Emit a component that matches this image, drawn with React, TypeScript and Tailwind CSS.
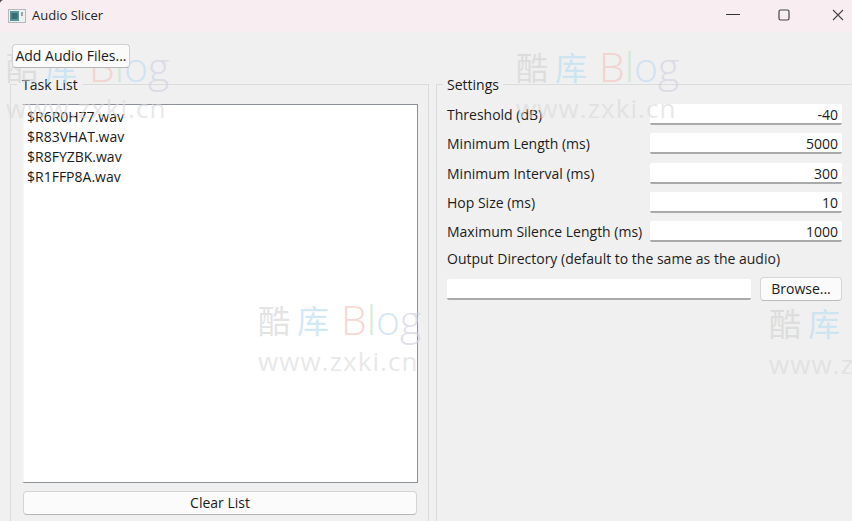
import React from "react";

const font = { fontFamily: '"Open Sans", "Noto Sans CJK SC", sans-serif' };

function Watermark({ className }: { className: string }) {
  return (
    <div className={`absolute pointer-events-none select-none w-[170px] ${className}`}>
      <div className="flex items-center h-[40px] leading-[40px]">
        <span className="text-[32px] text-[#d2d2d2] opacity-60 font-['Noto_Sans_CJK_SC']">酷</span>
        <span className="text-[32px] text-[#bfe0f2] opacity-70 ml-[7px] font-['Noto_Sans_CJK_SC']">库</span>
        <span className="text-[41px] text-[#f3c9c4] opacity-70 ml-[12px] font-light">B</span>
        <span className="text-[41px] text-[#c5e8c8] opacity-70 font-light">l</span>
        <span className="text-[41px] text-[#c4def0] opacity-70 font-light">o</span>
        <span className="text-[41px] text-[#d4d4e2] opacity-70 font-light">g</span>
      </div>
      <div className="mt-[7px] text-[26px] leading-[30px] text-[#dadada] opacity-60 tracking-[1.1px] whitespace-nowrap">www.zxki.cn</div>
    </div>
  );
}

function Field({ label, value }: { label: string; value: string }) {
  return (
    <div className="flex items-center justify-between h-[21px]">
      <span className="text-[#1c1c1c]">{label}</span>
      <div className="w-[192px] h-[21px] bg-white rounded-[2px] border-b-2 border-[#a9a9a9] text-right pr-[4px] leading-[21px] text-[#1a1a1a]">
        {value}
      </div>
    </div>
  );
}

export default function App() {
  return (
    <div style={font} className="relative w-[852px] h-[521px] overflow-hidden bg-[#f0f0f0] text-[14px] text-[#1a1a1a] flex flex-col">
      <header className="h-[32px] shrink-0 bg-[#f8eef2] flex items-center">
        <svg width="18" height="14" viewBox="0 0 18 14" className="ml-[8px] mb-[1px]">
          <rect x="0.5" y="0.5" width="17" height="13" fill="#eef0f0" stroke="#b4baba" />
          <rect x="2" y="2" width="9" height="10" fill="#5a9496" />
          <rect x="3.5" y="4" width="6" height="6" fill="#3a6c74" />
          <rect x="13" y="3" width="2" height="4" fill="#9aa4a6" />
        </svg>
        <span className="ml-[6px] text-[13px] text-[#222]">Audio Slicer</span>
        <div className="ml-auto flex items-center mb-[2px]">
          <svg width="14" height="12" viewBox="0 0 14 12"><path d="M0 5.5H14" stroke="#333" strokeWidth="1" /></svg>
          <svg width="12" height="12" viewBox="0 0 12 12" className="ml-[38px]"><rect x="1" y="1" width="10" height="10" rx="1.5" fill="none" stroke="#444" strokeWidth="1.2" /></svg>
          <svg width="12" height="12" viewBox="0 0 12 12" className="ml-[42px] mr-[8px]"><path d="M1 1L11 11M11 1L1 11" stroke="#444" strokeWidth="1.1" /></svg>
        </div>
      </header>

      <div className="pl-[12px] pt-[12px] h-[52px] shrink-0">
        <button className="relative z-10 w-[118px] h-[24px] bg-[#fbfbfb] border border-[#d0d0d0] border-b-[#b5b5b5] rounded-[4px] text-[14px] leading-[20px] whitespace-nowrap text-center text-[#1a1a1a]">
          Add Audio Files...
        </button>
      </div>

      <main className="flex pl-[10px] gap-[7px] w-[870px]">
        <section className="relative w-[419px] h-[460px] border border-[#dcdcdc] pt-[19px] pl-[11px] pr-[10px]">
          <span className="absolute left-[6px] -top-[10px] px-[5px] bg-[#f0f0f0] leading-[20px]">Task List</span>
          <div className="h-[379px] bg-white border-t border-r border-b border-[#8c9099] border-l-[2px] border-l-[#f4f4f4] pl-[3px] pt-[2px] leading-[20px]">
            <div>$R6R0H77.wav</div>
            <div>$R83VHAT.wav</div>
            <div>$R8FYZBK.wav</div>
            <div>$R1FFP8A.wav</div>
          </div>
          <button className="mt-[8px] ml-[1px] w-[394px] h-[24px] bg-[#fbfbfb] border border-[#d4d4d4] border-b-[#b5b5b5] rounded-[4px] text-center leading-[20px]">
            Clear List
          </button>
        </section>

        <section className="relative w-[426px] h-[460px] border border-[#dcdcdc] pt-[19px] pl-[10px] pr-[19px] flex flex-col">
          <span className="absolute left-[6px] -top-[10px] px-[4px] bg-[#f0f0f0] leading-[20px]">Settings</span>
          <div className="flex flex-col gap-[8.25px]">
            <Field label="Threshold (dB)" value="-40" />
            <Field label="Minimum Length (ms)" value="5000" />
            <Field label="Minimum Interval (ms)" value="300" />
            <Field label="Hop Size (ms)" value="10" />
            <Field label="Maximum Silence Length (ms)" value="1000" />
          </div>
          <div className="mt-[7px] leading-[20px] h-[20px] text-[#1c1c1c]">Output Directory (default to the same as the audio)</div>
          <div className="mt-[8px] flex items-center justify-between">
            <div className="w-[304px] h-[21px] bg-white rounded-[2px] border-b-2 border-[#a9a9a9]" />
            <button className="w-[82px] h-[24px] bg-[#fbfbfb] border border-[#d6d6d6] border-b-[#bcbcbc] rounded-[4px] text-center leading-[20px]">
              Browse...
            </button>
          </div>
        </section>
      </main>

      <Watermark className="left-[6px] top-[46px]" />
      <Watermark className="left-[516px] top-[46px]" />
      <Watermark className="left-[258px] top-[299px]" />
      <Watermark className="left-[769px] top-[302px]" />

      <svg width="4" height="4" viewBox="0 0 4 4" className="absolute left-0 top-0"><path d="M0 0H3Q0.5 0.5 0 3Z" fill="#444" /></svg>
    </div>
  );
}
